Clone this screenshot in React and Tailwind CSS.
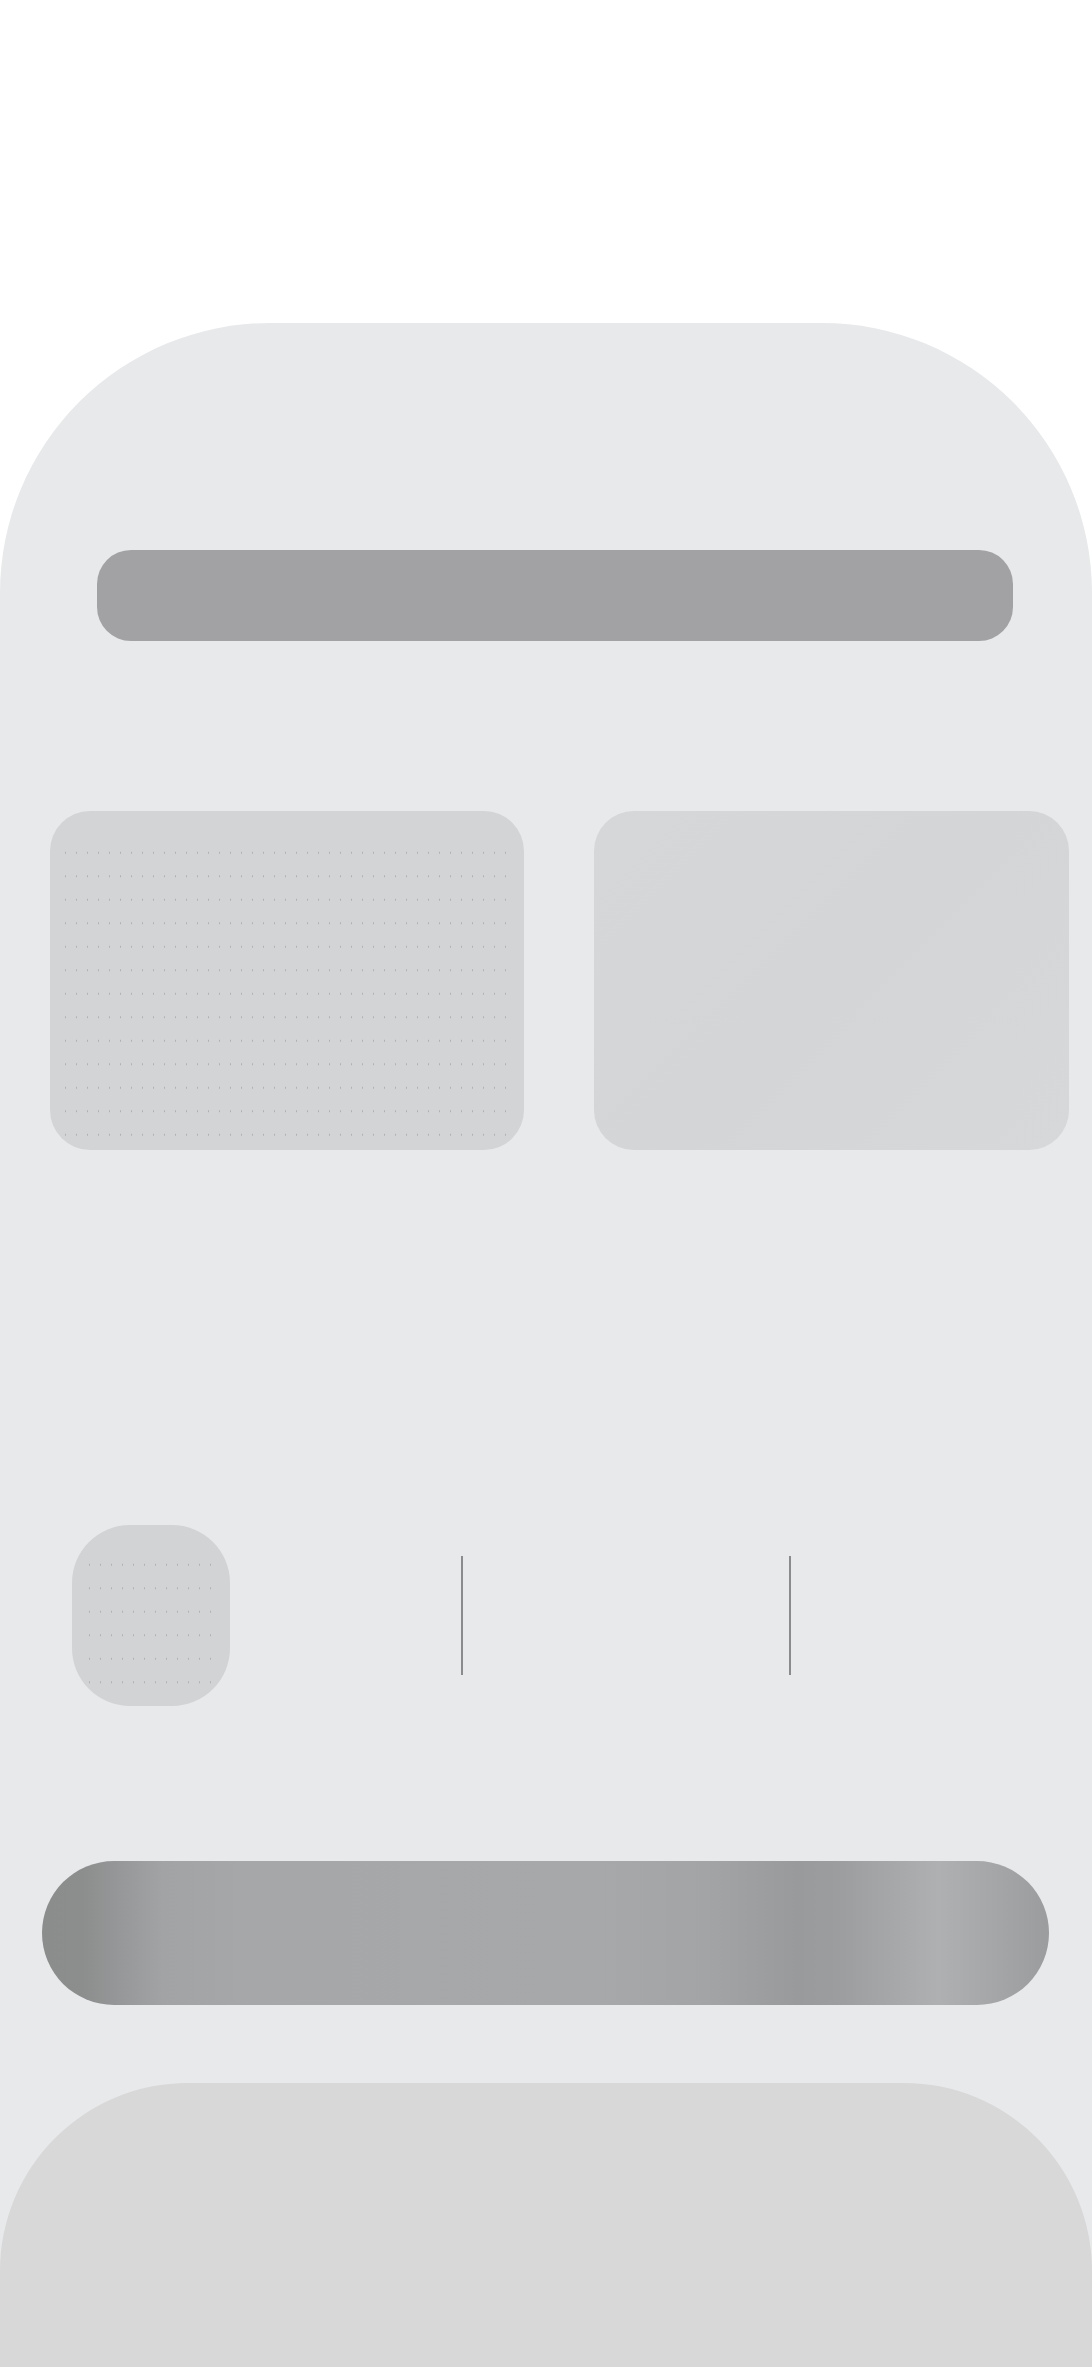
import React from 'react';

export default function App() {
  return (
    <div className="min-h-screen bg-white pt-[323px]">
      <div className="flex min-h-[2044px] flex-col rounded-t-[270px] bg-[#e8e9eb]">
        {/* top bar */}
        <div className="ml-[97px] mt-[227px] h-[91px] w-[916px] rounded-[34px] bg-[#a2a2a4]"></div>

        {/* two panels */}
        <div className="ml-[50px] mt-[170px] flex gap-[70px]">
          <div className="h-[339px] w-[474px] rounded-[40px] bg-[#d3d4d6] px-[10px] pb-[8px] pt-[30px]">
            <div className="h-full w-full bg-[image:radial-gradient(circle,#b0b1b3_0.6px,transparent_0.9px)] bg-[length:11px_23.5px]"></div>
          </div>
          <div className="h-[339px] w-[475px] rounded-[40px] bg-[#d5d6d8] bg-[image:linear-gradient(135deg,#d6d7d9,#d4d5d7_50%,#d7d8da)]"></div>
        </div>

        {/* controls row */}
        <div className="ml-[72px] mt-[375px] flex items-center">
          <div className="h-[181px] w-[158px] rounded-[58px] bg-[#d2d3d5] px-[12px] pb-[14px] pt-[28px]">
            <div className="h-full w-full bg-[image:radial-gradient(circle,#b0b1b3_0.6px,transparent_0.9px)] bg-[length:11px_23.5px]"></div>
          </div>
          <div className="ml-[231px] h-[119px] w-[2px] bg-[#8a8b8d]"></div>
          <div className="ml-[326px] h-[119px] w-[2px] bg-[#8a8b8d]"></div>
        </div>

        {/* gradient pill */}
        <div className="ml-[42px] mt-[155px] h-[144px] w-[1007px] rounded-full bg-[linear-gradient(90deg,#8b8c8c_0%,#8c8d8d_4%,#a2a3a5_12%,#a6a7a9_20%,#a7a8aa_55%,#a3a4a6_66%,#999a9c_75%,#9c9d9f_79%,#a9aaac_86%,#afb0b2_89%,#a6a7a9_94%,#9b9c9e_100%)]"></div>

        {/* bottom sheet */}
        <div className="mt-[78px] flex-1 rounded-t-[188px] bg-[#d8d8d9]"></div>
      </div>
    </div>
  );
}
